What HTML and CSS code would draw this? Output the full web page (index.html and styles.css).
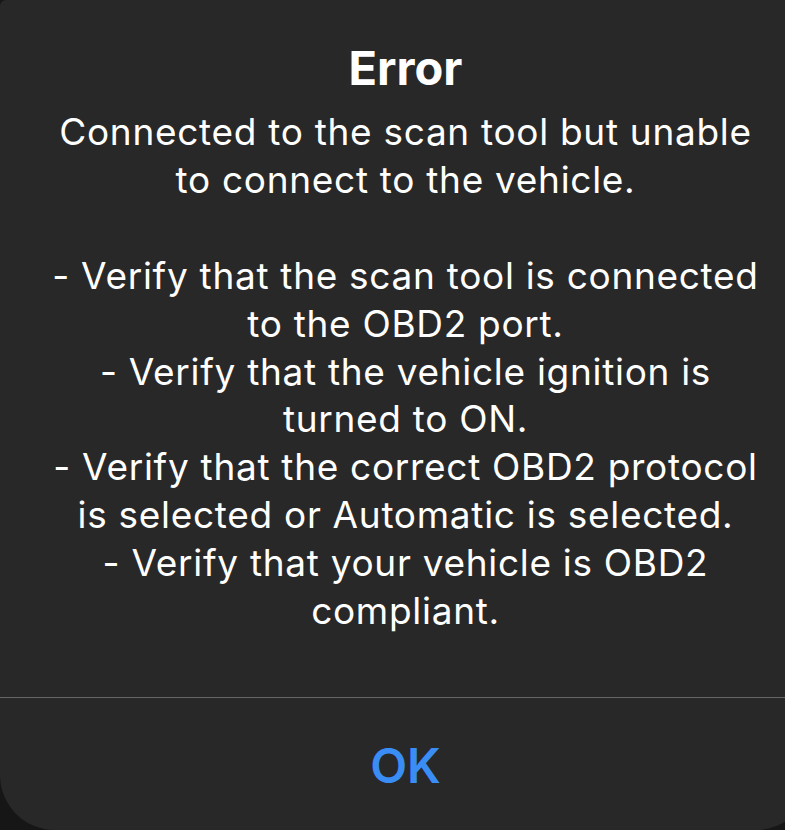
FILE: index.html
```html
<!DOCTYPE html>
<html>
<head>
<meta charset="utf-8">
<link rel="stylesheet" href="styles.css">
</head>
<body>
<div class="alert">
  <div class="content">
    <h1 class="title">Error</h1>
    <p class="message">Connected to the scan tool but unable<br>to connect to the vehicle.</p>
    <p class="message blank">&nbsp;</p>
    <p class="message">- Verify that the scan tool is connected<br>to the OBD2 port.<br>- Verify that the vehicle ignition is<br>turned to ON.<br>- Verify that the correct OBD2 protocol<br>is selected or Automatic is selected.<br>- Verify that your vehicle is OBD2<br>compliant.</p>
  </div>
  <div class="divider"></div>
  <div class="actions">
    <button class="btn">OK</button>
  </div>
</div>
</body>
</html>
```
FILE: styles.css
```css
html, body {
  margin: 0;
  padding: 0;
  background: #161616;
  width: 785px;
  height: 830px;
  overflow: hidden;
}
.alert {
  width: 811px;
  height: 830px;
  box-sizing: border-box;
  background: #282828;
  border-radius: 6px 6px 55px 55px;
  display: flex;
  flex-direction: column;
  font-family: Inter, "Noto Sans", sans-serif;
  color: #ffffff;
}
.content {
  height: 697px;
  box-sizing: border-box;
  padding: 38px 0 0;
  text-align: center;
  white-space: nowrap;
}
.title {
  margin: 0 0 10px;
  font-size: 47px;
  font-weight: 700;
  line-height: 60px;
}
.message {
  margin: 0;
  font-size: 37px;
  font-weight: 400;
  line-height: 47.9px;
  letter-spacing: 0.7px;
}
.message.blank { height: 47.9px; }
.divider {
  height: 1px;
  background: #666667;
}
.actions {
  flex: 1;
  display: flex;
  align-items: center;
  justify-content: center;
}
.btn {
  background: none;
  border: 0;
  color: #3b8df6;
  font-family: Inter, "Noto Sans", sans-serif;
  font-size: 48px;
  font-weight: 600;
  padding: 0;
  margin-top: 2px;
}
```
